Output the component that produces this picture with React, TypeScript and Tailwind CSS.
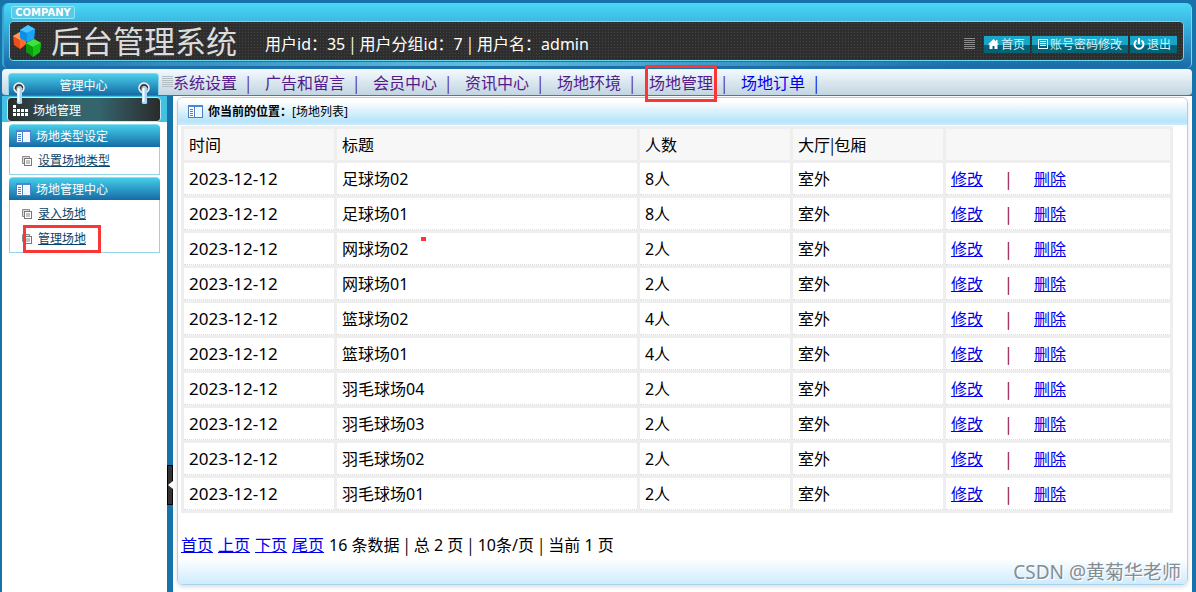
import React from 'react';

interface Venue {
    date: string;
    title: string;
    people: string;
    room: string;
}

const NAV_ITEMS = ['系统设置', '广告和留言', '会员中心', '资讯中心', '场地环境', '场地管理', '场地订单'];

const MENU_GROUPS = [
    { title: '场地类型设定', items: ['设置场地类型'] },
    { title: '场地管理中心', items: ['录入场地', '管理场地'] },
];

const VENUES: Venue[] = [
    { date: '2023-12-12', title: '足球场02', people: '8人', room: '室外' },
    { date: '2023-12-12', title: '足球场01', people: '8人', room: '室外' },
    { date: '2023-12-12', title: '网球场02', people: '2人', room: '室外' },
    { date: '2023-12-12', title: '网球场01', people: '2人', room: '室外' },
    { date: '2023-12-12', title: '篮球场02', people: '4人', room: '室外' },
    { date: '2023-12-12', title: '篮球场01', people: '4人', room: '室外' },
    { date: '2023-12-12', title: '羽毛球场04', people: '2人', room: '室外' },
    { date: '2023-12-12', title: '羽毛球场03', people: '2人', room: '室外' },
    { date: '2023-12-12', title: '羽毛球场02', people: '2人', room: '室外' },
    { date: '2023-12-12', title: '羽毛球场01', people: '2人', room: '室外' },
];

const CubesLogo = () => (
    <svg width="30" height="34" viewBox="0 0 30 34" className="shrink-0">
        <path d="M0 12l7-4 6 4v8l-6 5-6-4z" fill="#e8501c" />
        <path d="M0 12l7-4 6 4-6 4z" fill="#ff9a5c" />
        <path d="M7 16l6-4v8l-6 5z" fill="#ff6a2c" />
        <path d="M7 6l8-5 7 4-1 10-7 3-7-4z" fill="#0c8fe8" />
        <path d="M7 6l8-5 7 4-8 4z" fill="#4cc4ff" />
        <path d="M14 9l8-4-1 10-7 3z" fill="#1aa4f8" />
        <path d="M13 19l8-4 7 4-1 9-7 5-7-5z" fill="#0a9a10" />
        <path d="M13 19l8-4 7 4-8 4z" fill="#3fe23c" />
        <path d="M20 23l8-4-1 9-7 5z" fill="#12c416" />
    </svg>
);

const PanelIcon = () => (
    <svg width="15" height="13" viewBox="0 0 15 13" className="shrink-0">
        <rect x="0.5" y="0.5" width="14" height="12" fill="#fff" stroke="#4a80c4" />
        <path d="M0 0h15v2H0z" fill="#4a86d8" />
        <path d="M6 2h1v10H6z" fill="#4a80c4" />
        <path d="M2 4h3v1H2zM2 6h3v1H2zM2 8h3v1H2zM2 10h3v1H2z" fill="#4a80c4" />
        <path d="M8 3h6v9H8z" fill="#eef6ff" />
    </svg>
);

const PagesIcon = () => (
    <svg width="10" height="10" viewBox="0 0 10 10" className="shrink-0">
        <path d="M2.5 7.5h-2v-7h7v2" fill="#ddd" stroke="#8a8a8a" />
        <rect x="2.5" y="2.5" width="7" height="7" fill="#fff" stroke="#777" />
        <path d="M4 5h4M4 7h4" stroke="#888" />
    </svg>
);

const DotsIcon = () => (
    <svg width="15" height="11" viewBox="0 0 15 11" className="shrink-0" fill="#fff">
        <path d="M0 0h3v3H0zM0 4h3v3H0zM4 4h3v3H4zM8 4h3v3H8zM12 4h3v3h-3zM0 8h3v3H0zM4 8h3v3H4zM8 8h3v3H8zM12 8h3v3h-3z" />
    </svg>
);

const Stripes = ({ color }: { color: string }) => (
    <svg width="11" height="12" viewBox="0 0 11 12" className="shrink-0">
        <path d="M0 0.5h11M0 2.5h11M0 4.5h11M0 6.5h11M0 8.5h11M0 10.5h11" stroke={color} />
    </svg>
);

const HomeIcon = () => (
    <svg width="11" height="10" viewBox="0 0 11 10" className="shrink-0">
        <path d="M5.5 0L8 2.5V1h1.500v3L11 5.500H9.5V10h-3V7h-2v3h-3V5.500H0z" fill="#fff" />
    </svg>
);

const ListIcon = () => (
    <svg width="10" height="10" viewBox="0 0 10 10" className="shrink-0">
        <rect x="0.5" y="0.5" width="9" height="9" fill="none" stroke="#e8fbff" />
        <path d="M2 2.5h6M2 4.5h6M2 6.5h6" stroke="#e8fbff" />
    </svg>
);

const PowerIcon = () => (
    <svg width="12" height="12" viewBox="0 0 12 12" className="shrink-0" fill="none" stroke="#fff" strokeWidth="2">
        <path d="M3.500 2.500a4.500 4.500 0 1 0 5 0M6 0v6" />
    </svg>
);

const Ring = () => (
    <svg width="12" height="24" viewBox="0 0 12 24">
        <circle cx="6" cy="6" r="5" fill="#8a8580" stroke="#f4f4f4" strokeWidth="1.5" />
        <path d="M2.500 7a3.500 3.500 0 0 1 7-1" fill="none" stroke="#3a3532" strokeWidth="1.5" />
        <path d="M6 4a3 3 0 0 1 3 3v12a2 2 0 0 1-2 3H6a2 2 0 0 1-2-3V7a3 3 0 0 1 2-3z" fill="#a9d5f4" />
        <path d="M5.500 6v14" stroke="#fff" strokeWidth="2" />
    </svg>
);

// The CJK face has the tall, narrow bar
const Bar = () => <span className="leading-none font-['Noto_Sans_CJK_SC',sans-serif]">|</span>;

const dots = 'bg-[#2e2e2e] bg-[radial-gradient(#444444_35%,transparent_45%)] bg-[size:3px_3px]';
const toolLink = 'flex items-center gap-[2px] h-[17px] text-[12px] leading-[17px] text-[#d5f2f8] bg-[linear-gradient(#18a6c8_50%,#036276_50%)]';

const Header = () => (
    <header className="h-[65px] rounded-t-[6px] rounded-b-[5px] border-l-2 border-[#37a5cf] border-r-[#8bd0ec] border-r px-[5px] pr-[7px] pt-[3px] bg-[linear-gradient(#4ad8f6,#34aada_42%,#1b6ea9_95%)]">
        <div className="flex items-center justify-center w-16 h-[13px] mb-[2px] ml-[2px] rounded-[2px] border border-[#8ce9fb] bg-[#5bcae6]">
            <span className="text-[10px] leading-[10px] font-bold text-white font-['DejaVu_Sans',sans-serif]">COMPANY</span>
        </div>
        <div className={`flex items-center h-10 rounded-[4px] border border-[#6bd7ee] pl-[3px] pr-[6px] ${dots}`}>
            <CubesLogo />
            <h1 className="ml-2 text-[31px] leading-[38px] text-[#dcdcdc]">后台管理系统</h1>
            <p className="flex items-baseline gap-[5px] ml-7 pt-[6px] leading-6 text-white whitespace-nowrap">
                <span>用户id：35</span>
                <Bar />
                <span>用户分组id：7</span>
                <Bar />
                <span>用户名：admin</span>
            </p>
            <div className="flex items-center gap-[2px] ml-auto pt-[6px]">
                <span className="mr-[7px]"><Stripes color="#8b8b8b" /></span>
                <a href="#" className={`pl-1 w-[46px] ${toolLink}`}>
                    <HomeIcon />首页
                </a>
                <a href="#" className={`pl-[6px] w-24 ${toolLink}`}>
                    <ListIcon />账号密码修改
                </a>
                <a href="#" className={`pl-[3px] w-[47px] ${toolLink}`}>
                    <PowerIcon />退出
                </a>
            </div>
        </div>
        <div className="h-1 mt-[1px] bg-[radial-gradient(circle_at_40%,#62bedf,transparent_70%)]" />
    </header>
);

const TopNav = () => (
    <div className="flex h-[27px] mt-[1px] rounded-[4px] bg-linear-to-b from-[#f4faff] to-[#c2d5e0] border-b border-[#2a7fb0]">
        <div className="relative w-[151px] h-[22px] ml-[6px] mt-1 rounded-t-[4px] border-t border-x border-[#8bd6ec] bg-linear-to-b from-[#4bcfe9] to-[#156ca5] text-center text-[12px] leading-[23px] text-white shrink-0">
            管理中心
            <div className="absolute left-1 right-[8px] top-2 z-10 flex justify-between">
                <Ring />
                <Ring />
            </div>
        </div>
        <div className="flex items-center pl-[3px]"><Stripes color="#b3bdc4" /></div>
        <nav className="flex leading-7 whitespace-nowrap">
            {NAV_ITEMS.map(item => (
                <a key={item} href="#" className={`flex ${item === '场地订单' ? 'text-[#0000ee]' : 'text-[#551a8b]'}`}>
                    <span className="relative">
                        {item}
                        {item === '场地管理' && <span className="absolute -inset-x-1 -top-1 h-[37px] z-10 border-3 border-[#fa3737]" />}
                    </span>
                    <span className="w-7 pl-[9px]"><Bar /></span>
                </a>
            ))}
        </nav>
    </div>
);

const Sidebar = () => (
    <aside className="w-[165px] shrink-0 bg-white text-[12px]">
        <div className="h-[26px] pl-[5px] pr-[6px] pt-[1px] bg-[#42c2e2]">
            <div className="flex items-center gap-[5px] h-[25px] pl-[5px] pt-[2px] rounded-[4px] border border-[#bfe8f4] text-white bg-[linear-gradient(90deg,#2b2b2b,#34646c_40%,#34646c_60%,#2b2b2b)]">
                <DotsIcon />
                <span>场地管理</span>
            </div>
        </div>
        <div className="flex flex-col gap-[2px] px-[7px] pt-[2px]">
            {MENU_GROUPS.map(group => (
                <section key={group.title}>
                    <h2 className="flex items-center gap-[5px] h-[23px] pl-[7px] pt-[1px] rounded-t-[4px] border-t border-[#8bdff0] bg-linear-to-b from-[#46cde8] to-[#156ca5] text-white">
                        <PanelIcon />
                        {group.title}
                    </h2>
                    <ul className="border border-t-0 border-[#96d3e8] py-[1px]">
                        {group.items.map(item => (
                            <li key={item} className="relative flex items-center gap-[6px] h-[25px] pl-3">
                                <PagesIcon />
                                <a href="#" className="text-[#0b4466] underline">{item}</a>
                                {item === '管理场地' && (
                                    <span className="absolute left-[13px] -top-[1px] w-[78px] h-7 border-3 border-[#fa3737]" />
                                )}
                            </li>
                        ))}
                    </ul>
                </section>
            ))}
        </div>
    </aside>
);

const VenueTable = () => (
    <table className="w-full table-fixed border-separate border-spacing-[3px] bg-[#eeeeee] text-left text-black leading-6">
        <thead>
            <tr className="h-[31px] *:bg-[#f7f7f7] *:font-normal *:px-[5px] *:py-0">
                <th className="w-[15.4%]">时间</th>
                <th className="w-[30.8%]">标题</th>
                <th className="w-[15.4%]">人数</th>
                <th className="w-[15.4%]">大厅<Bar />包厢</th>
                <td></td>
            </tr>
        </thead>
        <tbody>
            {VENUES.map((venue, i) => (
                <tr key={venue.title} className="h-8 *:bg-white *:px-[5px] *:py-0 *:border-b *:border-dotted *:border-[#dddddd]">
                    <td className="text-[17px]">{venue.date}</td>
                    <td className="relative">
                        {venue.title}
                        {i === 2 && <span className="absolute left-[84px] top-1 w-[5px] h-1 bg-[#fa3737]" />}
                    </td>
                    <td>{venue.people}</td>
                    <td>{venue.room}</td>
                    <td>
                        <div className="flex items-baseline text-[#0000ee]">
                            <a href="#" className="underline">修改</a>
                            <span className="w-[51px] text-center text-[#8b0000]"><Bar /></span>
                            <a href="#" className="underline">删除</a>
                        </div>
                    </td>
                </tr>
            ))}
        </tbody>
    </table>
);

const Content = () => (
    <main className="flex-1 min-w-0 flex flex-col bg-white pl-1 pr-1 pt-[1px] pb-[7px]">
        <div className="relative flex-1 flex flex-col rounded-[6px] border border-[#a5d3ee] shadow-[0_2px_4px_#dddddd]">
            <div className="flex items-center h-[27px] pl-[10px] rounded-t-[5px] bg-[linear-gradient(#ffffff_10%,#b9e4fb_85%,#c9ebfd)] text-[12px] text-black">
                <PanelIcon />
                <span className="ml-[5px] font-bold">你当前的位置：</span>
                <span>[场地列表]</span>
            </div>
            <div className="flex-1 pl-[3px] pr-[14px] pt-[1px]">
                <VenueTable />
                <div className="flex items-baseline gap-[5px] mt-5 leading-6 text-black">
                    {['首页', '上页', '下页', '尾页'].map(label => (
                        <a key={label} href="#" className="underline text-[#0000ee]">{label}</a>
                    ))}
                    <span>16 条数据</span>
                    <Bar />
                    <span>总 2 页</span>
                    <Bar />
                    <span>10条/页</span>
                    <Bar />
                    <span>当前 1 页</span>
                </div>
            </div>
            <div className="h-[26px] rounded-b-[5px] bg-linear-to-b from-white to-[#cfebfd]" />
            <span className="absolute right-[6px] bottom-0 text-[19px] leading-6 text-[#858d93] [text-shadow:1px_1px_0_#ffffff]">CSDN @黄菊华老师</span>
        </div>
    </main>
);

export default function App() {
    return (
        <div className="min-h-screen flex flex-col pl-[2px] pr-1 pt-[3px] bg-[#1873aa] text-[16px] font-['Noto_Sans','Noto_Sans_CJK_SC',sans-serif]">
            <Header />
            <TopNav />
            <div className="flex-1 flex">
                <Sidebar />
                <div className="w-[6px] shrink-0 pt-[369px]">
                    <button aria-label="收起" className="flex items-center w-[6px] h-10 border border-black bg-[#333333]">
                        <svg width="5" height="8" viewBox="0 0 5 8" className="shrink-0"><path d="M5 0v8L0 4z" fill="#fff" /></svg>
                    </button>
                </div>
                <Content />
            </div>
        </div>
    );
}
